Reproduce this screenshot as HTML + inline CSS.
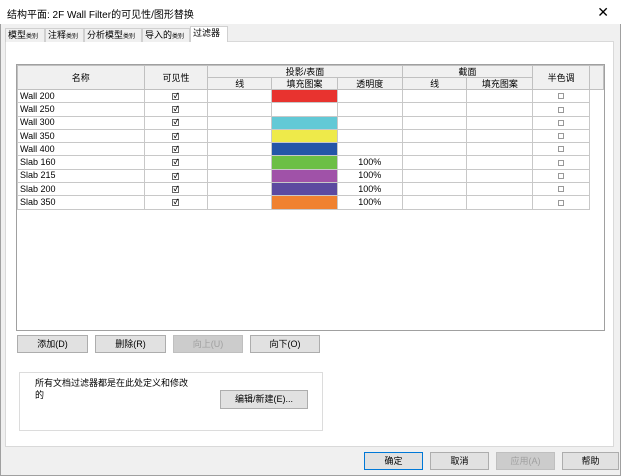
<!DOCTYPE html><html><head><meta charset="utf-8"><style>
*{box-sizing:border-box;margin:0;padding:0}
body{width:621px;height:476px;position:relative;overflow:hidden;background:#f0f0f0;font-family:"Liberation Sans","Noto Sans CJK SC",sans-serif;font-size:9px;color:#000}
.a{position:absolute}
.win{left:0;top:0;width:621px;height:476px;border:1px solid #a0a0a0;border-top:none}
.title{left:0;top:0;width:621px;height:24px;background:#fff;font-size:10px;padding:6px 0 0 7px}
.tabs{left:5px;top:28px}
.tab{position:absolute;top:0;height:14px;border:1px solid #d0d0d0;border-bottom:none;background:#f0f0f0;font-size:9px;line-height:12px;padding:0 2px;white-space:nowrap}
.tab small{font-size:6px}
.page{left:5px;top:41px;width:609px;height:406px;background:#fff;border:1px solid #d9d9d9}
.list{left:16px;top:64px;width:589px;height:267px;border:1px solid #a0a0a0;background:#fff}
table{border-collapse:collapse;position:absolute;left:0;top:0;table-layout:fixed}
td{border:1px solid #c8c8c8;height:13.3px;line-height:11px;padding:0 2px;text-align:center;font-size:9px;overflow:hidden;white-space:nowrap}
th{background:#f0f0f0;border:1px solid #c0c0c0;font-weight:normal;font-size:9px;height:12px;line-height:10px;padding:0}
td.n{text-align:left}
.cb{display:inline-block;width:6px;height:6px;border:1px solid #999;vertical-align:middle}
.ck{display:inline-block;width:7px;height:7px;border:1px solid #666;vertical-align:middle;font-size:7px;line-height:5px;font-weight:bold;text-align:center}
.btn{position:absolute;height:18px;background:#e1e1e1;border:1px solid #adadad;text-align:center;line-height:16px;font-size:9px}
.dis{color:#a0a0a0;background:#ccc;border-color:#bfbfbf}
</style></head><body>
<div class="a win"></div>
<div class="a title">结构平面: 2F Wall Filter的可见性/图形替换</div>
<div class="a" style="right:12px;top:4px;font-size:14px">✕</div>
<div class="a page"></div>
<div class="a tabs">
<div class="tab" style="left:0;width:40px">模型<small>类别</small></div>
<div class="tab" style="left:40px;width:39px">注释<small>类别</small></div>
<div class="tab" style="left:79px;width:58px">分析模型<small>类别</small></div>
<div class="tab" style="left:137px;width:48px">导入的<small>类别</small></div>
<div class="tab" style="left:185px;width:38px;top:-2px;height:16px;background:#fff">过滤器</div>
</div>
<div class="a list">
<table>
<colgroup><col style="width:127px"><col style="width:64px"><col style="width:64px"><col style="width:66px"><col style="width:65px"><col style="width:65px"><col style="width:66px"><col style="width:57px"><col style="width:14px"></colgroup>
<tr><th rowspan="2">名称</th><th rowspan="2">可见性</th><th colspan="3">投影/表面</th><th colspan="2">截面</th><th rowspan="2">半色调</th><th rowspan="2"></th></tr>
<tr><th>线</th><th>填充图案</th><th>透明度</th><th>线</th><th>填充图案</th></tr>
<tr><td class="n">Wall 200</td><td><span class="ck">✓</span></td><td></td><td style="background:#e8332f"></td><td></td><td></td><td></td><td><span class="cb"></span></td><td style="border:none"></td></tr>
<tr><td class="n">Wall 250</td><td><span class="ck">✓</span></td><td></td><td style="background:#fff"></td><td></td><td></td><td></td><td><span class="cb"></span></td><td style="border:none"></td></tr>
<tr><td class="n">Wall 300</td><td><span class="ck">✓</span></td><td></td><td style="background:#62c9d6"></td><td></td><td></td><td></td><td><span class="cb"></span></td><td style="border:none"></td></tr>
<tr><td class="n">Wall 350</td><td><span class="ck">✓</span></td><td></td><td style="background:#eeea4a"></td><td></td><td></td><td></td><td><span class="cb"></span></td><td style="border:none"></td></tr>
<tr><td class="n">Wall 400</td><td><span class="ck">✓</span></td><td></td><td style="background:#2556a8"></td><td></td><td></td><td></td><td><span class="cb"></span></td><td style="border:none"></td></tr>
<tr><td class="n">Slab 160</td><td><span class="ck">✓</span></td><td></td><td style="background:#6cbf45"></td><td>100%</td><td></td><td></td><td><span class="cb"></span></td><td style="border:none"></td></tr>
<tr><td class="n">Slab 215</td><td><span class="ck">✓</span></td><td></td><td style="background:#a052a8"></td><td>100%</td><td></td><td></td><td><span class="cb"></span></td><td style="border:none"></td></tr>
<tr><td class="n">Slab 200</td><td><span class="ck">✓</span></td><td></td><td style="background:#5c4aa0"></td><td>100%</td><td></td><td></td><td><span class="cb"></span></td><td style="border:none"></td></tr>
<tr><td class="n">Slab 350</td><td><span class="ck">✓</span></td><td></td><td style="background:#f0812f"></td><td>100%</td><td></td><td></td><td><span class="cb"></span></td><td style="border:none"></td></tr>
</table>
</div>
<div class="btn" style="left:17px;top:335px;width:71px">添加(D)</div>
<div class="btn" style="left:95px;top:335px;width:71px">删除(R)</div>
<div class="btn dis" style="left:173px;top:335px;width:70px">向上(U)</div>
<div class="btn" style="left:250px;top:335px;width:70px">向下(O)</div>
<div class="a" style="left:19px;top:372px;width:304px;height:59px;border:1px solid #dcdcdc;background:#fff"></div>
<div class="a" style="left:35px;top:377px;width:160px;line-height:12px">所有文档过滤器都是在此处定义和修改的</div>
<div class="btn" style="left:220px;top:390px;width:88px;height:19px">编辑/新建(E)...</div>
<div class="btn" style="left:364px;top:452px;width:59px;border-color:#0078d7">确定</div>
<div class="btn" style="left:430px;top:452px;width:59px">取消</div>
<div class="btn dis" style="left:496px;top:452px;width:59px">应用(A)</div>
<div class="btn" style="left:562px;top:452px;width:57px">帮助</div>
</body></html>
